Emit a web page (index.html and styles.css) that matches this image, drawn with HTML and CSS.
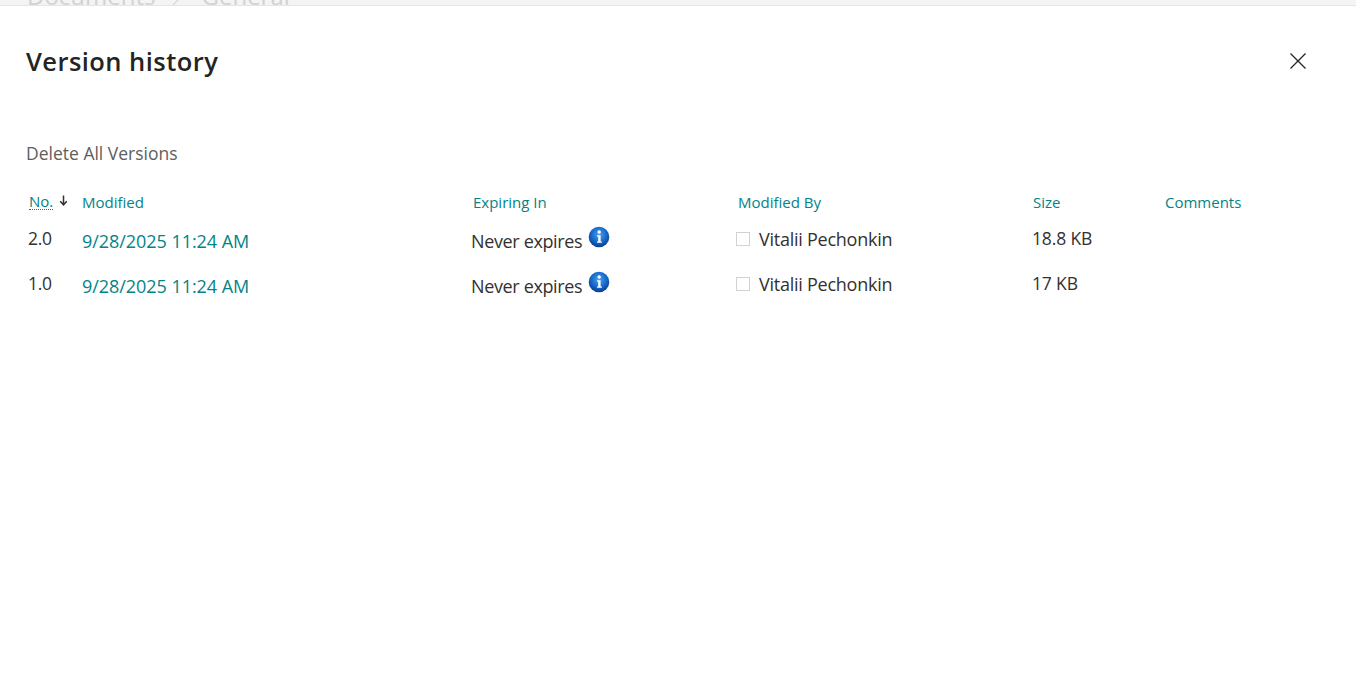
FILE: index.html
```html
<!DOCTYPE html>
<html lang="en">
<head>
<meta charset="utf-8">
<title>Version history</title>
<link rel="stylesheet" href="styles.css">
</head>
<body>
<div class="backdrop">
  <div class="crumbs"><span>Documents</span>
    <svg class="crumb-sep" width="18" height="30" viewBox="0 0 18 30"><path d="M2 2 L16 16 L2 30" fill="none" stroke="#d4d4d4" stroke-width="1.2"/></svg>
    <span>General</span></div>
</div>
<main class="panel">
  <header class="panel-head">
    <h1 class="title">Version history</h1>
    <button class="close" aria-label="Close">
      <svg width="18" height="18" viewBox="0 0 18 18"><path d="M1.5 1.5 L16.5 16.5 M16.5 1.5 L1.5 16.5" fill="none" stroke="#242424" stroke-width="1.3"/></svg>
    </button>
  </header>
  <div class="delete-all">Delete All Versions</div>
  <div class="versions">
    <div class="row head">
      <div class="c-no"><span class="abbr">No.</span><svg class="sort" width="9" height="11" viewBox="0 0 9 11"><path d="M4.5 0.5 V9.5 M1.2 6.2 L4.5 9.8 L7.8 6.2" fill="none" stroke="#333" stroke-width="1.5"/></svg></div>
      <div class="h-mod">Modified</div>
      <div>Expiring In</div>
      <div>Modified By</div>
      <div class="h-size">Size</div>
      <div>Comments</div>
    </div>
    <div class="row item">
      <div class="c-num">2.0</div>
      <div class="c-date">9/28/2025 11:24 AM</div>
      <div class="c-exp">Never expires
        <svg class="info" width="22" height="22" viewBox="0 0 22 22"><use href="#info-i"/></svg></div>
      <div class="c-user"><span class="box"></span>Vitalii Pechonkin</div>
      <div class="c-size">18.8 KB</div>
      <div></div>
    </div>
    <div class="row item">
      <div class="c-num">1.0</div>
      <div class="c-date">9/28/2025 11:24 AM</div>
      <div class="c-exp">Never expires
        <svg class="info" width="22" height="22" viewBox="0 0 22 22"><use href="#info-i"/></svg></div>
      <div class="c-user"><span class="box"></span>Vitalii Pechonkin</div>
      <div class="c-size">17 KB</div>
      <div></div>
    </div>
  </div>
</main>
<svg class="defs" width="0" height="0">
  <defs>
    <radialGradient id="ball" cx="50%" cy="38%" r="62%">
      <stop offset="0" stop-color="#4aa3f0"/>
      <stop offset="0.6" stop-color="#1568cc"/>
      <stop offset="1" stop-color="#0a3c8a"/>
    </radialGradient>
    <g id="info-i">
      <circle cx="11" cy="11" r="10.3" fill="url(#ball)"/>
      <circle cx="11.2" cy="6" r="1.7" fill="#fff"/>
      <path d="M9 9.2 H12.6 V15.4 H13.8 V16.8 H9 V15.4 H10.2 V10.6 H9 Z" fill="#fff"/>
    </g>
  </defs>
</svg>
</body>
</html>
```
FILE: styles.css
```css
* { box-sizing: border-box; }
html, body { margin: 0; height: 100%; background: #fff; overflow: hidden; }
body { font-family: "Open Sans", "Noto Sans", sans-serif; color: #323130; }

.backdrop { height: 6px; background: #f4f4f4; border-bottom: 1px solid #e6e6e6; overflow: hidden; }
.crumbs { display: flex; align-items: flex-start; gap: 14px; margin-top: -19px; padding-left: 27px; font-size: 24px; line-height: 30px; color: #d2d2d2; }
.crumb-sep { margin-top: -4px; }

.panel { padding: 0 49px 0 26px; }
.panel-head { display: flex; justify-content: space-between; align-items: center; height: 134px; padding-bottom: 24px; }
.title { margin: 0; font-size: 25.5px; font-weight: 600; color: #242424; letter-spacing: 0.45px; }
.close { width: 18px; height: 18px; margin: 0; padding: 0; border: 0; background: none; display: block; }
.close svg { display: block; }

.delete-all { font-size: 17.5px; line-height: 24px; height: 49px; color: #605e5c; padding-top: 1px; }

.row { display: grid; grid-template-columns: 56px 390px 265px 295px 132px 1fr; }
.head { height: 26px; margin-bottom: 6px; align-items: center; font-size: 15px; color: #038387; padding-bottom: 1px; }
.head > div { padding-left: 1px; }
.head > .h-mod { padding-left: 0; }
.head > .c-no { color: #038387; display: flex; align-items: center; gap: 5px; padding-left: 3px; }
.abbr { border-bottom: 1px dotted #038387; line-height: 16px; }
.sort { margin-top: -2px; margin-left: 1px; }

.item { height: 45px; align-items: flex-start; font-size: 18px; line-height: 24px; }
.c-num { padding-left: 2px; padding-top: 5px; font-size: 17.5px; letter-spacing: -0.36px; }
.c-date { padding-top: 8px; color: #038387; letter-spacing: -0.05px; }
.c-exp { padding-top: 8px; display: flex; align-items: flex-start; gap: 5.5px; margin-left: -1px; letter-spacing: -0.36px; }
.info { margin-top: -3.5px; }
.c-user { padding-top: 6px; display: flex; align-items: center; margin-left: -1px; letter-spacing: -0.25px; }
.box { width: 14px; height: 14px; border: 1px solid #d2d2d2; margin-right: 9px; background: #fff; }
.c-size { padding-top: 5px; font-size: 17.5px; letter-spacing: -0.15px; }
.defs { position: absolute; }
```
